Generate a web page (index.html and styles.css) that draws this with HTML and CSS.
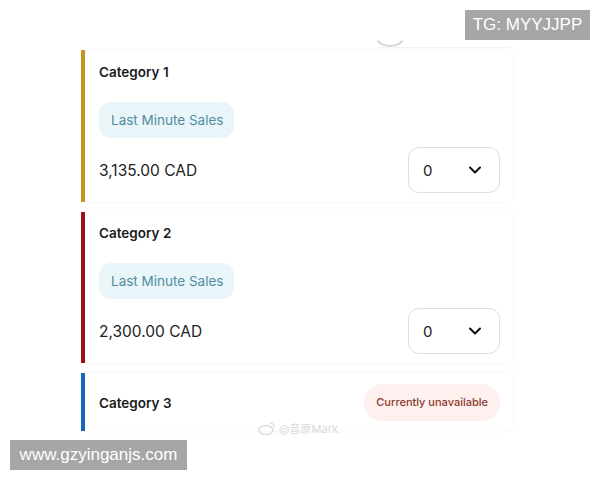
FILE: index.html
```html
<!DOCTYPE html>
<html>
<head>
<meta charset="utf-8">
<link rel="stylesheet" href="styles.css">
</head>
<body>
<div class="page">
  <div class="prev">
    <div class="prev-circle"></div>
    <div class="prev-line"></div>
  </div>
  <div class="list">
    <div class="card gold">
      <div class="card-body">
        <div class="title">Category 1</div>
        <div class="pill">Last Minute Sales</div>
        <div class="row">
          <div class="price">3,135.00 CAD</div>
          <div class="select"><span>0</span>
            <svg width="14" height="14" viewBox="0 0 14 14"><polyline points="2,4.5 7,9.5 12,4.5" fill="none" stroke="#111" stroke-width="2" stroke-linecap="round" stroke-linejoin="round"/></svg>
          </div>
        </div>
      </div>
    </div>
    <div class="card red">
      <div class="card-body">
        <div class="title">Category 2</div>
        <div class="pill">Last Minute Sales</div>
        <div class="row">
          <div class="price">2,300.00 CAD</div>
          <div class="select"><span>0</span>
            <svg width="14" height="14" viewBox="0 0 14 14"><polyline points="2,4.5 7,9.5 12,4.5" fill="none" stroke="#111" stroke-width="2" stroke-linecap="round" stroke-linejoin="round"/></svg>
          </div>
        </div>
      </div>
    </div>
    <div class="card blue">
      <div class="card-body compact">
        <div class="title">Category 3</div>
        <div class="unavail">Currently unavailable</div>
      </div>
    </div>
  </div>
  <div class="wm">
    <svg width="18" height="14" viewBox="0 0 18 14"><ellipse cx="8" cy="9" rx="7" ry="4.5" fill="none" stroke="#ddd" stroke-width="1.6"/><path d="M12 2 a4 4 0 0 1 4 4" fill="none" stroke="#ddd" stroke-width="1.6"/></svg>
    <span>@音原Mark</span>
  </div>
  <div class="tag tag-top">TG: MYYJJPP</div>
  <div class="tag tag-bottom">www.gzyinganjs.com</div>
</div>
</body>
</html>
```
FILE: styles.css
```css
html, body {
  margin: 0;
  padding: 0;
  background: #fff;
}
.page {
  position: relative;
  width: 600px;
  height: 480px;
  overflow: hidden;
  font-family: Inter, "Noto Sans", "Noto Sans CJK SC", sans-serif;
  color: #1c1c1c;
}
.prev {
  position: relative;
  height: 50px;
}
.prev-circle {
  position: absolute;
  left: 371px;
  top: 9px;
  width: 34px;
  height: 34px;
  border-radius: 50%;
  border: 2px solid transparent;
  border-bottom-color: #d6d6d6;
}
.prev-line {
  position: absolute;
  left: 380px;
  right: 90px;
  top: 47px;
  height: 1px;
  background: #f3f3f3;
}
.list {
  display: flex;
  flex-direction: column;
  gap: 10px;
  margin-left: 81px;
  width: 432px;
}
.card {
  display: flex;
  border-left: 4px solid #c4971f;
}
.card.red { border-left-color: #9c1016; }
.card.blue { border-left-color: #1767c2; }
.card-body {
  flex: 1;
  display: flex;
  flex-direction: column;
  align-items: flex-start;
  padding: 12px 13px 9px 14px;
  box-shadow: 0 0 3px rgba(0, 0, 0, 0.06);
  border-radius: 0 6px 6px 0;
}
.card.red .card-body { padding-top: 11px; }
.title {
  font-size: 13.5px;
  font-weight: 600;
  line-height: 20px;
  color: #1a1a1a;
}
.pill {
  margin-top: 20px;
  height: 36px;
  line-height: 36px;
  padding: 0 11px 0 12px;
  border-radius: 12px;
  background: #eaf5f9;
  color: #4f8fa1;
  font-size: 13.5px;
}
.row {
  margin-top: 9px;
  align-self: stretch;
  display: flex;
  justify-content: space-between;
  align-items: center;
}
.price {
  font-size: 15.5px;
  color: #222;
}
.select {
  box-sizing: border-box;
  width: 92px;
  height: 46px;
  border: 1px solid #dedede;
  border-radius: 11px;
  display: flex;
  align-items: center;
  justify-content: space-between;
  padding: 0 17px 0 14px;
  font-size: 15px;
  color: #222;
}
.select svg { display: block; }
.card-body.compact {
  flex-direction: row;
  justify-content: space-between;
  align-items: center;
  padding: 11px 13px 10px 14px;
}
.unavail {
  height: 37px;
  line-height: 37px;
  padding: 0 12px;
  border-radius: 18px;
  background: #fdf0ee;
  color: #8b3a2c;
  font-size: 11px;
  font-weight: 500;
}
.wm {
  position: absolute;
  left: 258px;
  top: 420px;
  display: flex;
  align-items: center;
  gap: 3px;
  color: #dadada;
  font-size: 11px;
}
.tag {
  position: absolute;
  box-sizing: border-box;
  background: #a6a6a6;
  color: #fff;
  font-family: "Liberation Sans", Arial, sans-serif;
  font-size: 17px;
  height: 30px;
  line-height: 30px;
  text-align: center;
  white-space: nowrap;
}
.tag-top {
  left: 465px;
  top: 10px;
  width: 125px;
}
.tag-bottom {
  left: 10px;
  top: 440px;
  width: 177px;
}
```
